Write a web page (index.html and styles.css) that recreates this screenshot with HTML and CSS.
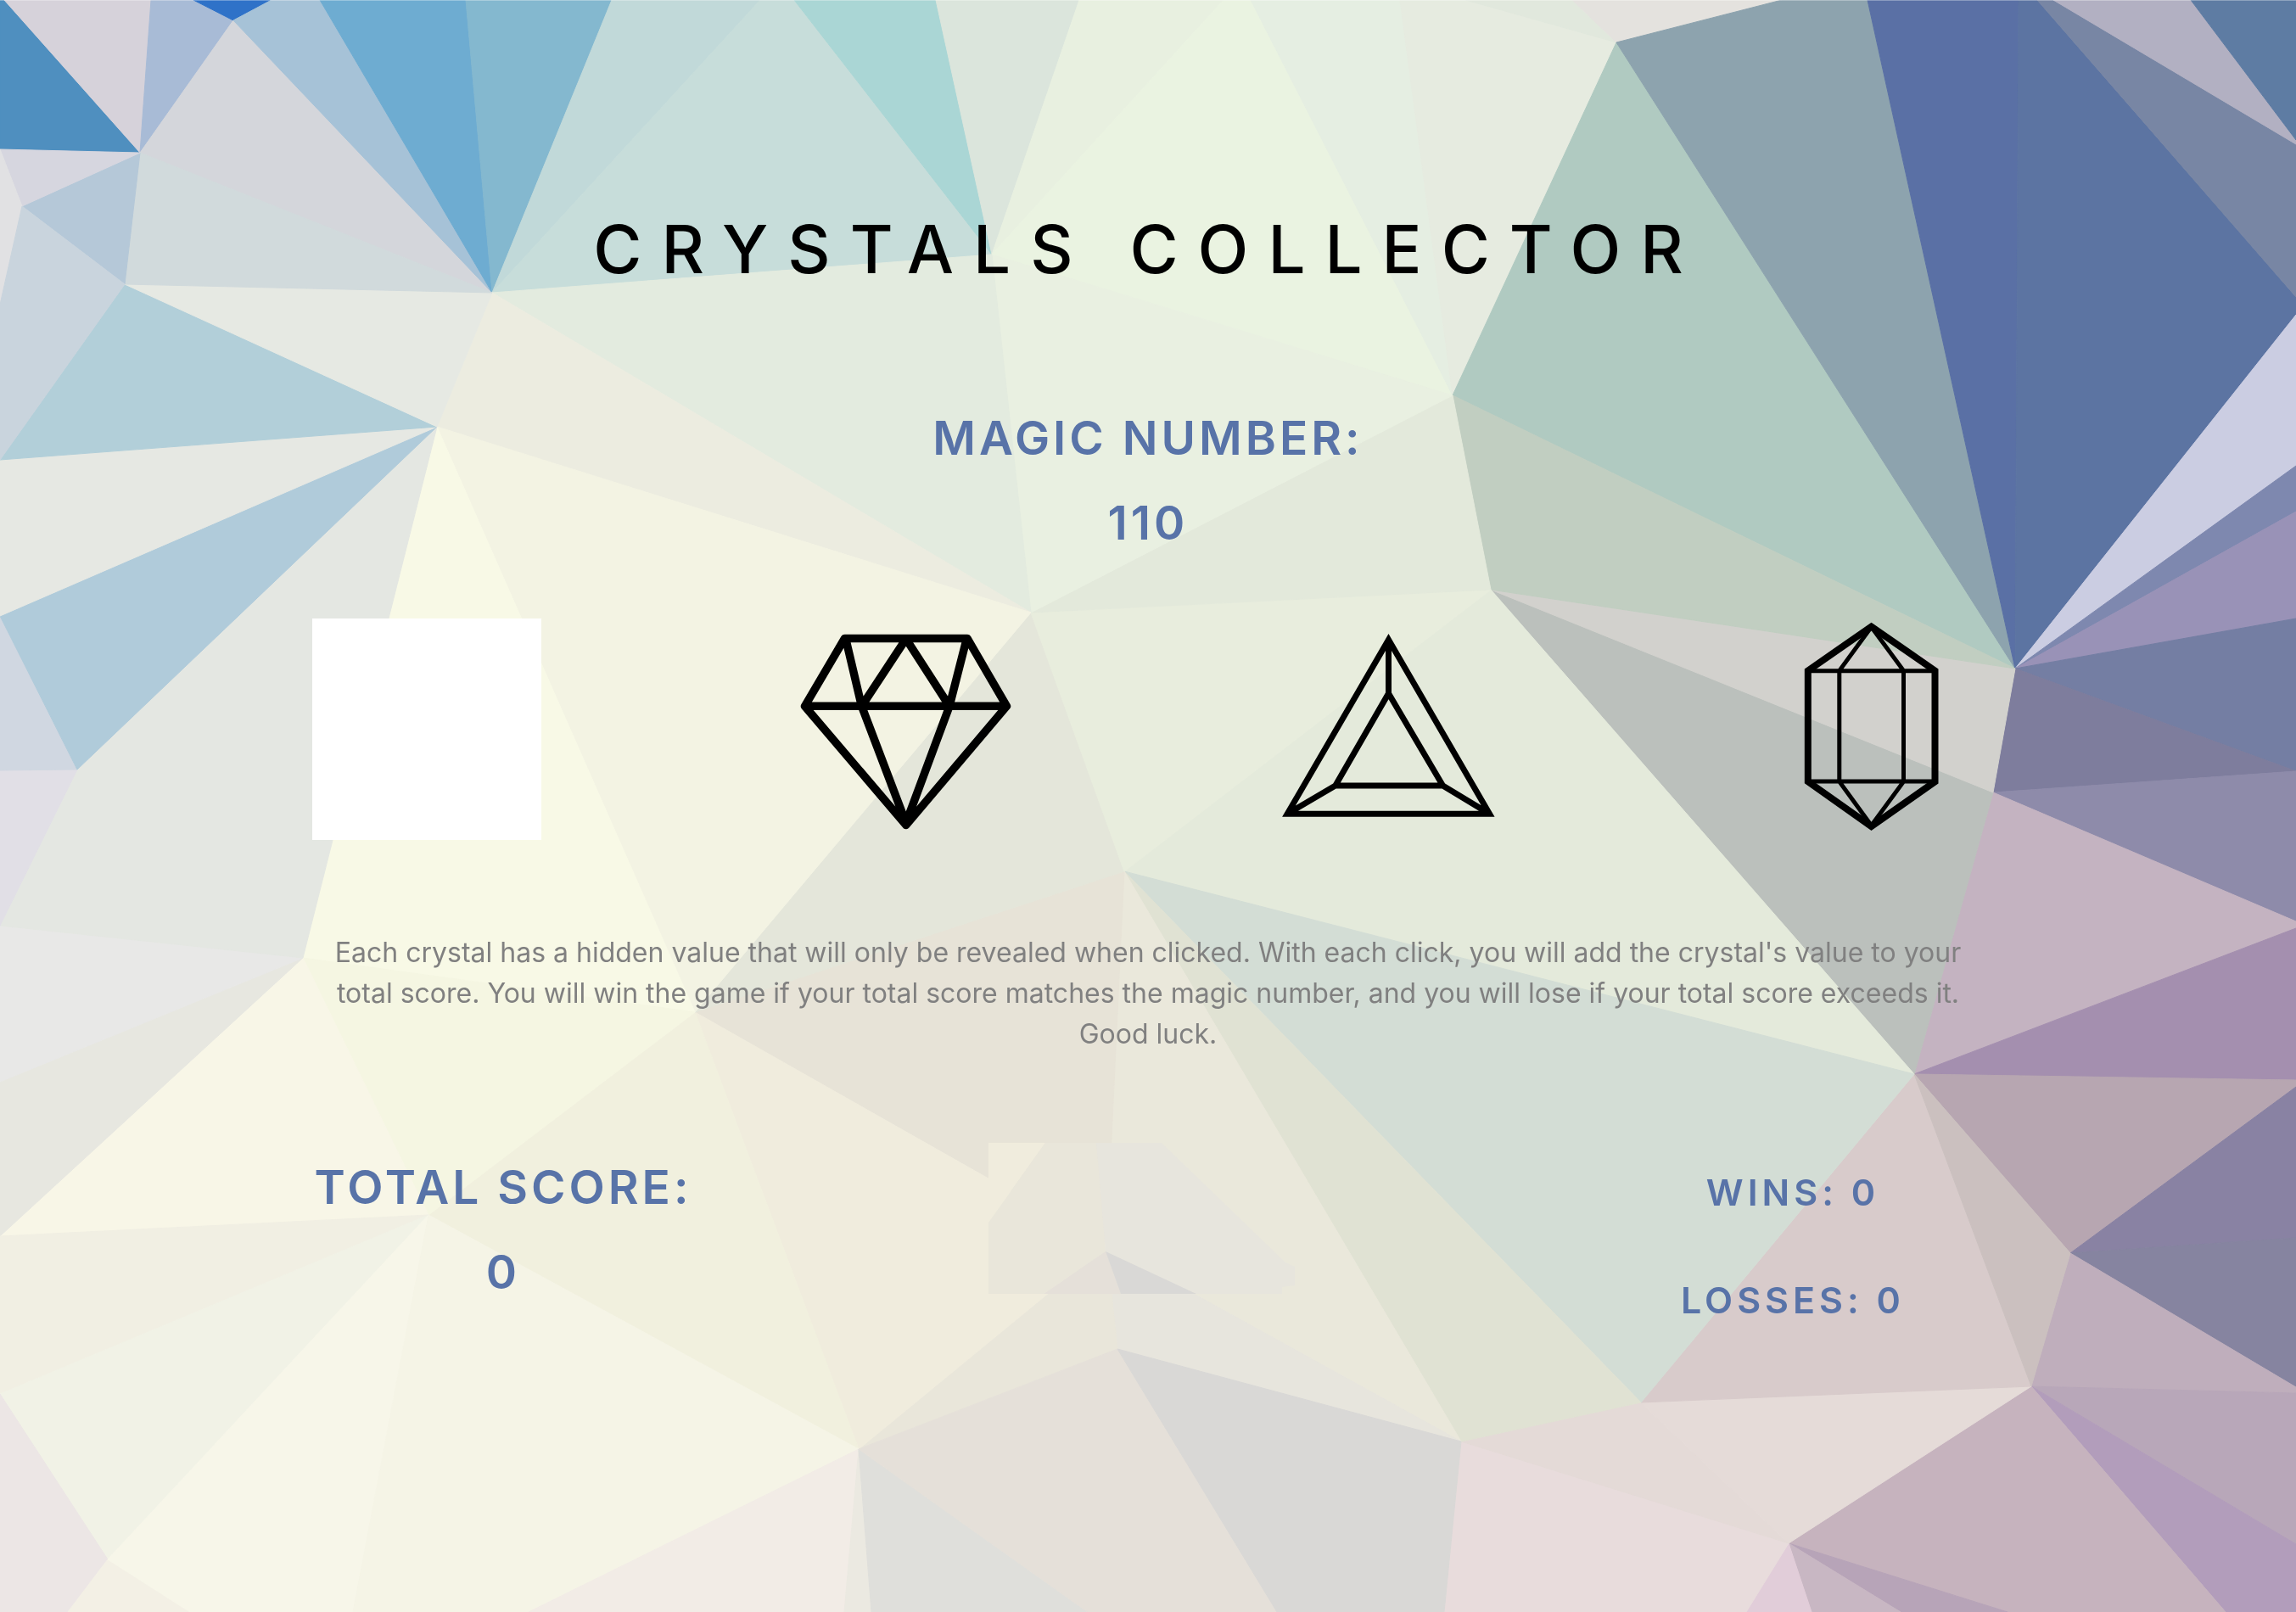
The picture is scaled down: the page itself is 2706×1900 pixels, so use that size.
FILE: index.html
```html
<!DOCTYPE html>
<html lang="en">
<head>
<meta charset="utf-8">
<meta name="viewport" content="width=device-width, initial-scale=1">
<title>Crystals Collector</title>
<link rel="stylesheet" href="styles.css">
</head>
<body>
<svg class="backdrop" viewBox="0 0 2706 1900" preserveAspectRatio="xMidYMid slice" aria-hidden="true">
  <!-- top left fan -->
  <polygon color="#4f8fbf" points="0,0 5,0 165,180 0,176"/>
  <polygon color="#d6d2da" points="5,0 178,0 165,180"/>
  <polygon color="#a8bbd6" points="178,0 228,0 275,24 165,180"/>
  <polygon color="#2f72c8" points="228,0 320,0 275,24"/>
  <polygon color="#d4d6db" points="275,24 165,180 580,345"/>
  <polygon color="#a6c2d7" points="275,24 320,0 377,0 580,345"/>
  <polygon color="#6eacd1" points="377,0 549,0 580,345"/>
  <polygon color="#84b8cf" points="549,0 721,0 580,345"/>
  <polygon color="#c1d9d9" points="721,0 896,0 580,345"/>
  <polygon color="#c7ddda" points="896,0 936,0 1169,300 580,345"/>
  <polygon color="#aad6d5" points="936,0 1103,0 1169,300"/>
  <!-- top centre -->
  <polygon color="#dbe5dc" points="1103,0 1272,0 1169,300"/>
  <polygon color="#e8f0e0" points="1272,0 1442,0 1169,300"/>
  <polygon color="#eaf3e1" points="1442,0 1474,0 1712,466 1169,300"/>
  <polygon color="#e5eee2" points="1474,0 1650,0 1712,466"/>
  <polygon color="#e6ebe0" points="1650,0 1727,0 1905,50 1712,466"/>
  <polygon color="#e1e8dd" points="1727,0 1853,0 1905,50"/>
  <polygon color="#e4e2de" points="1853,0 2100,0 1905,50"/>
  <!-- top right fan -->
  <polygon color="#b0cac1" points="1905,50 1712,466 2375,788"/>
  <polygon color="#8da3ae" points="1905,50 2100,0 2201,0 2375,788"/>
  <polygon color="#5a70a5" points="2201,0 2379,0 2375,788"/>
  <polygon color="#5c74a2" points="2379,0 2401,0 2706,350 2706,371 2375,788"/>
  <polygon color="#7886a4" points="2401,0 2420,0 2706,170 2706,350"/>
  <polygon color="#b2b0c2" points="2420,0 2582,0 2706,165 2706,170"/>
  <polygon color="#5e7ca3" points="2582,0 2706,0 2706,165"/>
  <!-- right side -->
  <polygon color="#cbcde2" points="2375,788 2706,371 2706,549"/>
  <polygon color="#7e88af" points="2375,788 2706,549 2706,603"/>
  <polygon color="#9992b7" points="2375,788 2706,603 2706,729"/>
  <polygon color="#747ea3" points="2375,788 2706,729 2706,909"/>
  <polygon color="#7e7d9d" points="2375,788 2706,909 2349,934"/>
  <polygon color="#8e8baa" points="2349,934 2706,909 2706,1086"/>
  <polygon color="#c4b3c1" points="2349,934 2706,1086 2706,1094 2256,1266"/>
  <polygon color="#a48faf" points="2256,1266 2706,1094 2706,1273"/>
  <polygon color="#b7a6b1" points="2256,1266 2706,1273 2706,1281 2440,1477"/>
  <polygon color="#8982a3" points="2440,1477 2706,1281 2706,1459"/>
  <polygon color="#8684a0" points="2440,1477 2706,1459 2706,1635"/>
  <polygon color="#bfaebc" points="2440,1477 2706,1635 2706,1642 2394,1634"/>
  <!-- bottom right -->
  <polygon color="#b8a7b9" points="2394,1634 2706,1642 2706,1820"/>
  <polygon color="#b29dbb" points="2394,1634 2706,1820 2706,1900 2623,1900"/>
  <polygon color="#c6b3be" points="2394,1634 2623,1900 2366,1900 2108,1819"/>
  <polygon color="#b7a4b8" points="2108,1819 2366,1900 2240,1900"/>
  <polygon color="#c8b7c3" points="2108,1819 2240,1900 2135,1900"/>
  <polygon color="#e1cdd9" points="2108,1819 2135,1900 2058,1900"/>
  <polygon color="#e8dcdc" points="2108,1819 2058,1900 1702,1900 1722,1699"/>
  <polygon color="#e4dad7" points="1722,1699 1934,1653 2108,1819"/>
  <polygon color="#e5dbd8" points="1934,1653 2394,1634 2108,1819"/>
  <polygon color="#d8cbcb" points="1934,1653 2256,1266 2394,1634"/>
  <polygon color="#cbc0bf" points="2256,1266 2440,1477 2394,1634"/>
  <!-- centre right -->
  <polygon color="#bbc0bc" points="2256,1266 2349,934 1757,695"/>
  <polygon color="#d2d1cd" points="1757,695 2375,788 2349,934"/>
  <polygon color="#c1cec1" points="1757,695 1712,466 2375,788"/>
  <polygon color="#e4eadb" points="1757,695 2256,1266 1325,1027"/>
  <polygon color="#d3ddd5" points="1325,1027 2256,1266 1934,1653"/>
  <polygon color="#e0e2d3" points="1325,1027 1934,1653 1722,1699"/>
  <!-- centre -->
  <polygon color="#eae8db" points="1325,1027 1722,1699 1304,1468"/>
  <polygon color="#e7e5dd" points="1304,1468 1722,1699 1317,1590"/>
  <polygon color="#e9e6da" points="1304,1468 1317,1590 1012,1708"/>
  <polygon color="#e7e3d7" points="819,1193 1325,1027 1304,1468"/>
  <polygon color="#f0ecdd" points="819,1193 1304,1468 1012,1708"/>
  <polygon color="#f1f0de" points="819,1193 505,1432 1012,1708"/>
  <polygon color="#e4e6da" points="1215,722 1325,1027 819,1193"/>
  <polygon color="#e8eddd" points="1215,722 1757,695 1325,1027"/>
  <polygon color="#e3e9db" points="1215,722 1712,466 1757,695"/>
  <polygon color="#e9f0e1" points="1169,300 1712,466 1215,722"/>
  <polygon color="#e3ebdf" points="1169,300 1215,722 580,345"/>
  <polygon color="#ecece0" points="580,345 1215,722 515,503"/>
  <polygon color="#f3f3e3" points="515,503 1215,722 819,1193"/>
  <polygon color="#f8f9e6" points="515,503 819,1193 357,1129"/>
  <polygon color="#f5f6e2" points="357,1129 819,1193 505,1432"/>
  <!-- left side -->
  <polygon color="#f8f6e7" points="357,1129 505,1432 0,1457"/>
  <polygon color="#e7e7e0" points="357,1129 0,1275 0,1457"/>
  <polygon color="#e8e8e7" points="357,1129 0,1091 0,1275"/>
  <polygon color="#e4e7e2" points="515,503 91,907 0,1091 357,1129"/>
  <polygon color="#e1dfe6" points="91,907 0,908 0,1091"/>
  <polygon color="#d0d7e1" points="91,907 0,908 0,726"/>
  <polygon color="#b0cbda" points="515,503 0,726 91,907"/>
  <polygon color="#e6e8e3" points="515,503 0,542 0,726"/>
  <polygon color="#b2cfd9" points="515,503 147,335 0,542"/>
  <polygon color="#e6e9e3" points="147,335 580,345 515,503"/>
  <polygon color="#d1dadc" points="165,180 580,345 147,335"/>
  <polygon color="#b5c8d8" points="165,180 147,335 26,243"/>
  <polygon color="#d6d6df" points="0,176 165,180 26,243"/>
  <polygon color="#e1e1e3" points="0,176 26,243 0,359"/>
  <polygon color="#c9d4dd" points="26,243 147,335 0,542 0,359"/>
  <!-- bottom left -->
  <polygon color="#f1efe3" points="505,1432 0,1457 0,1643"/>
  <polygon color="#f1f2e6" points="505,1432 0,1643 127,1838"/>
  <polygon color="#ece6e5" points="0,1643 127,1838 80,1900 0,1900"/>
  <polygon color="#f3f0e5" points="127,1838 80,1900 224,1900"/>
  <polygon color="#f7f6e9" points="505,1432 127,1838 224,1900 416,1900"/>
  <polygon color="#f5f4e6" points="505,1432 416,1900 623,1900 1012,1708"/>
  <polygon color="#f2ece6" points="1012,1708 623,1900 995,1900"/>
  <polygon color="#ebe9e1" points="1012,1708 995,1900 1027,1900"/>
  <polygon color="#dfdfdb" points="1012,1708 1027,1900 1282,1900"/>
  <polygon color="#e5e0d9" points="1012,1708 1317,1590 1505,1900 1282,1900"/>
  <polygon color="#d9d8d6" points="1317,1590 1722,1699 1702,1900 1505,1900"/>
</svg>

<main class="game">
  <h1 class="title">CRYSTALS COLLECTOR</h1>

  <section class="magic">
    <h2 class="heading">MAGIC NUMBER:</h2>
    <p class="heading">110</p>
  </section>

  <section class="gems" aria-label="Crystals">
    <button class="gem gem-blank" type="button" aria-label="Crystal one"></button>
    <button class="gem" type="button" aria-label="Crystal two">
      <svg class="gem-art" viewBox="0 0 270 261" stroke-width="9.500" stroke-linejoin="round" stroke-linecap="round">
        <path d="M60.500 23.500H205L251.500 103.300L132.800 243.500L13.500 103.300ZM13.500 103.300H251.500M62 25L80.500 103.300L132.800 24L184 103.300L204 25M80.500 103.300L132.800 241L184 103.300"/>
      </svg>
    </button>
    <button class="gem" type="button" aria-label="Crystal three">
      <svg class="gem-art" viewBox="0 0 270 261" stroke-width="7">
        <path d="M134.500 25L253.500 230.300H15.200ZM134.500 88.300L198.500 197H71.800ZM134.500 25V88.300M15.200 230.300L71.800 197M253.500 230.300L198.500 197"/>
      </svg>
    </button>
    <button class="gem" type="button" aria-label="Crystal four">
      <svg class="gem-art" viewBox="0 0 270 261" stroke-width="5">
        <path stroke-width="8" d="M136.500 9.500L211.500 61.500V192.300L136.500 245L61.800 192.300V61.500Z"/>
        <path d="M61.800 61.700H211.500M61.800 192H211.500M136.500 10L98.800 61.500V192.300L136.500 244L174.500 192.300V61.500Z"/>
      </svg>
    </button>
  </section>

  <p class="rules">Each crystal has a hidden value that will only be revealed when clicked. With each click, you will add the crystal's value to your total score. You will win the game if your total score matches the magic number, and you will lose if your total score exceeds it. Good luck.</p>

  <section class="stats">
    <div class="score">
      <h2 class="heading">TOTAL SCORE:</h2>
      <p class="heading">0</p>
    </div>
    <svg class="result" viewBox="0 0 376 178" aria-hidden="true">
      <polygon color="#f0ecdd" points="0,0 67,0 0,94"/>
      <polygon color="#e9e6da" points="67,0 127,0 138,128 65,178 0,178 0,94"/>
      <polygon color="#e7e5dd" points="127,0 204,0 350,141 361,146 361,168 346,170 346,178 245,178 138,128"/>
      <polygon color="#e5e0d9" points="138,128 156,178 65,178"/>
      <polygon color="#d9d8d6" points="138,128 245,178 156,178"/>
    </svg>
    <div class="record">
      <p class="tally">WINS: 0</p>
      <p class="tally">LOSSES: 0</p>
    </div>
  </section>
</main>
</body>
</html>
```

FILE: styles.css
```css
* {
  box-sizing: border-box;
}

body {
  margin: 0;
  min-height: 100vh;
  border-top: 1px solid rgba(255, 255, 255, 0.3);
  font-family: Inter, "Liberation Sans", sans-serif;
  color: #000;
}

h1,
h2,
p {
  margin: 0;
}

/* low-poly crystal pattern behind the whole page */
.backdrop {
  position: fixed;
  inset: 0;
  z-index: -1;
  width: 100%;
  height: 100%;
}

.backdrop polygon,
.result polygon {
  fill: currentColor;
}

.backdrop polygon {
  stroke: currentColor;
}

.game {
  max-width: 2280px;
  margin: 0 auto;
  padding: 245px 0 100px;
  text-align: center;
}

.title {
  font-size: 78px;
  font-weight: 500;
  line-height: 96px;
  letter-spacing: 23px;
}

.heading {
  font-size: 55px;
  font-weight: 600;
  line-height: 68px;
  letter-spacing: 4px;
  color: #5873a8;
}

.heading + .heading {
  margin-top: 32px;
}

.magic {
  margin-top: 140px;
}

.gems {
  display: grid;
  grid-template-columns: repeat(4, 1fr);
  justify-items: center;
  margin-top: 79px;
  padding: 0 6px;
}

.gem {
  width: 270px;
  height: 261px;
  padding: 0;
  border: 0;
  background: transparent;
  cursor: pointer;
}

.gem-blank {
  background: #fff;
}

.gem-art {
  display: block;
  width: 100%;
  height: 100%;
  fill: none;
  stroke: #000;
}

.rules {
  margin-top: 109px;
  padding: 0 170px;
  font-size: 32px;
  font-weight: 400;
  line-height: 48px;
  color: #808080;
}

.stats {
  display: grid;
  grid-template-columns: repeat(3, 1fr);
  justify-items: center;
  align-items: start;
  margin-top: 104px;
}

.score {
  padding-top: 18px;
}

.result {
  width: 376px;
  height: 178px;
}

.record {
  padding-top: 32px;
}

.tally {
  font-size: 43px;
  font-weight: 600;
  line-height: 52px;
  letter-spacing: 5px;
  color: #5873a8;
}

.tally + .tally {
  margin-top: 75px;
}
```
